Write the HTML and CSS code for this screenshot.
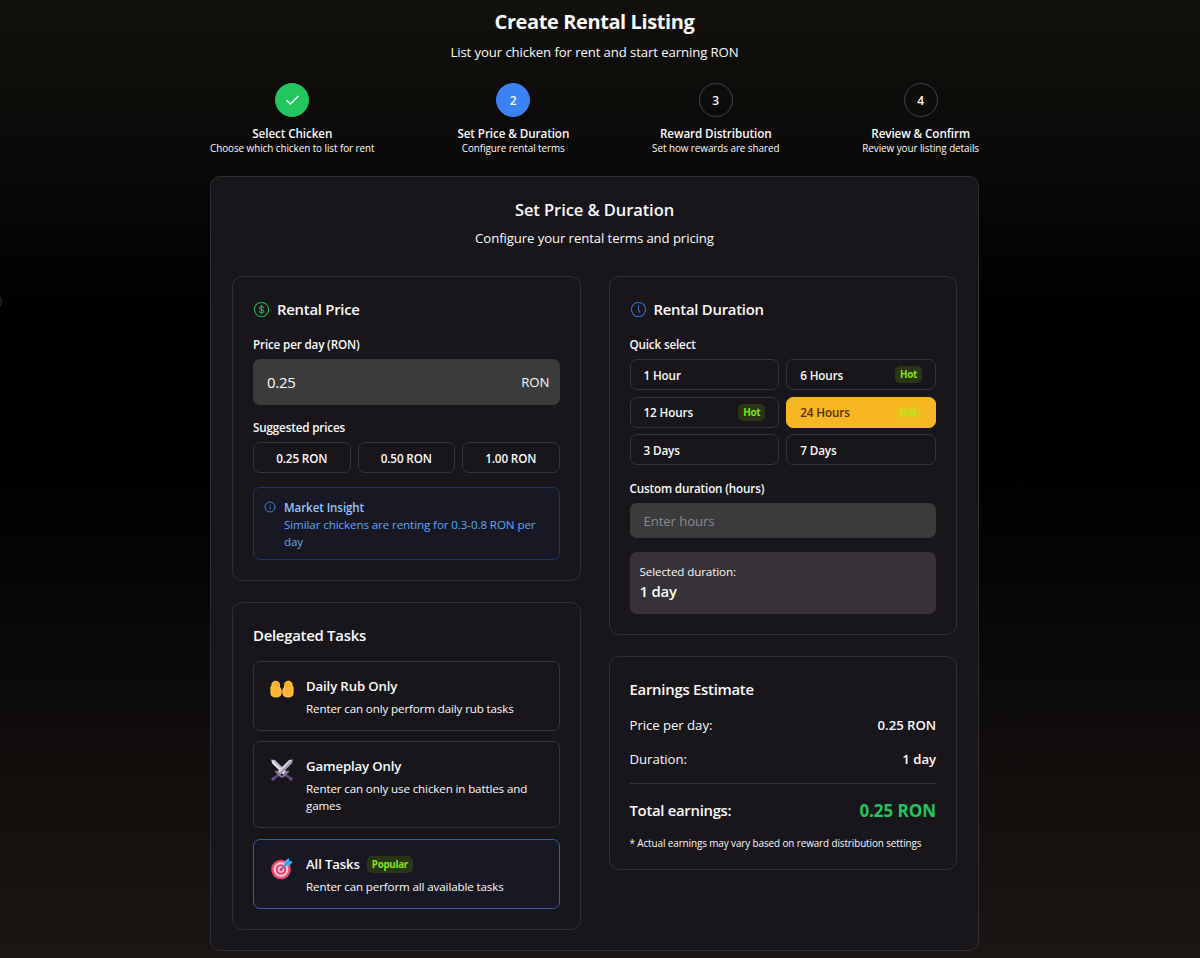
FILE: index.html
```html
<!DOCTYPE html>
<html lang="en">
<head>
    <meta charset="UTF-8">
    <meta name="viewport" content="width=device-width, initial-scale=1.0">
    <title>Create Rental Listing</title>
    <link rel="stylesheet" href="styles.css">
</head>
<body>
    <div class="edge-handle"></div>
    <main class="page">
        <header class="page-header">
            <h1>Create Rental Listing</h1>
            <p>List your chicken for rent and start earning RON</p>
        </header>

        <ol class="steps">
            <li class="step">
                <div class="step-circle done">
                    <svg viewBox="0 0 24 24"><path d="M20 6 9 17l-5-5"/></svg>
                </div>
                <strong>Select Chicken</strong>
                <span>Choose which chicken to list for rent</span>
            </li>
            <li class="step">
                <div class="step-circle current">2</div>
                <strong>Set Price &amp; Duration</strong>
                <span>Configure rental terms</span>
            </li>
            <li class="step">
                <div class="step-circle">3</div>
                <strong>Reward Distribution</strong>
                <span>Set how rewards are shared</span>
            </li>
            <li class="step">
                <div class="step-circle">4</div>
                <strong>Review &amp; Confirm</strong>
                <span>Review your listing details</span>
            </li>
        </ol>

        <section class="panel">
            <div class="panel-header">
                <h2>Set Price &amp; Duration</h2>
                <p>Configure your rental terms and pricing</p>
            </div>

            <div class="columns">
                <div class="column">
                    <div class="card">
                        <h3 class="with-icon">
                            <svg class="icon green" viewBox="0 0 24 24"><circle cx="12" cy="12" r="10"/><path d="M15 9.300C14.600 8.300 13.500 7.800 12 7.800c-1.800 0-3 .8-3 2 0 1.300 1.200 1.800 3 2.200s3.200.9 3.200 2.300c0 1.200-1.300 2-3.200 2-1.700 0-2.900-.6-3.300-1.700M12 6v12"/></svg>
                            Rental Price
                        </h3>
                        <label class="field-label" for="price">Price per day (RON)</label>
                        <div class="price-field">
                            <input type="text" id="price" value="0.25">
                            <span>RON</span>
                        </div>
                        <div class="field-label">Suggested prices</div>
                        <div class="price-options">
                            <button type="button">0.25 RON</button>
                            <button type="button">0.50 RON</button>
                            <button type="button">1.00 RON</button>
                        </div>
                        <div class="insight">
                            <svg class="insight-icon" viewBox="0 0 24 24"><circle cx="12" cy="12" r="10"/><path d="M12 16v-4"/><path d="M12 8h.01"/></svg>
                            <div>
                                <strong>Market Insight</strong>
                                <p>Similar chickens are renting for 0.3-0.8 RON per day</p>
                            </div>
                        </div>
                    </div>

                    <div class="card tasks">
                        <h3>Delegated Tasks</h3>
                        <div class="task">
                            <svg class="task-icon" viewBox="0 0 24 24">
                                <g id="hand">
                                    <path d="M.3 9.500q0-1.500 1-1.500L1.500 5.500q.3-1.300 1.400-1.200.5-1.500 1.700-1.300.9-.9 1.900 0 1.400-.4 1.800 1 1.400 0 1.500 1.500l.3 3.500q1.800 2 1.800 4.500 0 6-6 6T.4 14z" fill="#fcb935"/>
                                    <path d="M4 5v4M6.200 4.500v4.300M8.300 5.200V9M2.500 12.500q3.500-2 5.500 3" fill="none" stroke="#e8932a" stroke-width=".6"/>
                                </g>
                                <use href="#hand" transform="matrix(-1 0 0 1 24 0)"/>
                            </svg>
                            <div>
                                <h4>Daily Rub Only</h4>
                                <p>Renter can only perform daily rub tasks</p>
                            </div>
                        </div>
                        <div class="task">
                            <svg class="task-icon" viewBox="0 0 24 24">
                                <path d="M1.500 1.500 5 2l11.500 11.500-3 3L2 5z" fill="#b9b5c6"/>
                                <path d="M1.500 1.500 15 15l-1.500 1.500L2 5z" fill="#e4e1ea"/>
                                <path d="M22.500 1.500 19 2 7.500 13.500l3 3L22 5z" fill="#d3cfdd"/>
                                <path d="M22.500 1.500 9 15l1.500 1.500L22 5z" fill="#9c96ae"/>
                                <path d="m15 16.500 5.500 4M9 16.500l-5.500 4" stroke="#5b4783" stroke-width="2.400" stroke-linecap="round"/>
                                <path d="m13 18.500 5-5M11 18.500l-5-5" stroke="#8479a3" stroke-width="2" stroke-linecap="round"/>
                                <circle cx="21" cy="21" r="1.700" fill="#67518f"/>
                                <circle cx="3" cy="21" r="1.700" fill="#67518f"/>
                            </svg>
                            <div>
                                <h4>Gameplay Only</h4>
                                <p>Renter can only use chicken in battles and games</p>
                            </div>
                        </div>
                        <div class="task selected">
                            <svg class="task-icon" viewBox="0 0 24 24">
                                <circle cx="11" cy="13.500" r="9.800" fill="#e9486f"/>
                                <circle cx="11" cy="13.500" r="7.400" fill="#f7c6d6"/>
                                <circle cx="11" cy="13.500" r="5.300" fill="#e0456c"/>
                                <circle cx="11" cy="13.500" r="3.200" fill="#f5bfd0"/>
                                <circle cx="11" cy="13.500" r="1.500" fill="#d43b62"/>
                                <path d="m11 13.500 7-7" stroke="#2b78b5" stroke-width="1.400"/>
                                <path d="M14.500 9.500V5.800L18.500 2l1 3 3.500.8-4 4z" fill="#45b4f5"/>
                                <path d="m14.500 9.500 5-4.500" stroke="#1d7fd0" stroke-width="1"/>
                            </svg>
                            <div>
                                <h4>All Tasks <span class="badge">Popular</span></h4>
                                <p>Renter can perform all available tasks</p>
                            </div>
                        </div>
                    </div>
                </div>

                <div class="column">
                    <div class="card">
                        <h3 class="with-icon">
                            <svg class="icon blue" viewBox="0 0 24 24"><circle cx="12" cy="12" r="10"/><path d="M12 6v6l2 4"/></svg>
                            Rental Duration
                        </h3>
                        <div class="field-label">Quick select</div>
                        <div class="durations">
                            <button type="button">1 Hour</button>
                            <button type="button">6 Hours <span class="badge">Hot</span></button>
                            <button type="button">12 Hours <span class="badge">Hot</span></button>
                            <button type="button" class="active">24 Hours <span class="badge">Hot</span></button>
                            <button type="button">3 Days</button>
                            <button type="button">7 Days</button>
                        </div>
                        <label class="field-label" for="hours">Custom duration (hours)</label>
                        <input type="text" id="hours" class="hours-input" placeholder="Enter hours">
                        <div class="selected-duration">
                            <p>Selected duration:</p>
                            <strong>1 day</strong>
                        </div>
                    </div>

                    <div class="card earnings">
                        <h3>Earnings Estimate</h3>
                        <div class="row">
                            <span>Price per day:</span>
                            <strong>0.25 RON</strong>
                        </div>
                        <div class="row">
                            <span>Duration:</span>
                            <strong>1 day</strong>
                        </div>
                        <div class="row total">
                            <span>Total earnings:</span>
                            <strong>0.25 RON</strong>
                        </div>
                        <p class="note">* Actual earnings may vary based on reward distribution settings</p>
                    </div>
                </div>
            </div>
        </section>
    </main>
</body>
</html>
```
FILE: styles.css
```css
* {
    box-sizing: border-box;
}
body {
    margin: 0;
    padding-right: 11px;
    height: 958px;
    overflow: hidden;
    font-family: 'Open Sans', 'Noto Sans', sans-serif;
    font-size: 13.2px;
    color: #fafafa;
    background: linear-gradient(#13110e 0%, #0b0a08 16%, #000 33%, #000 48%, #0d0b0a 72%, #1b1613 100%);
}
h1, h2, h3, h4, p, ol {
    margin: 0;
    padding: 0;
}
strong, h2, h3, h4 {
    font-weight: 600;
}
button, input {
    font-family: inherit;
    color: inherit;
}
.edge-handle {
    position: absolute;
    left: -14px;
    top: 294px;
    width: 16px;
    height: 16px;
    border: 1px solid #333;
    border-radius: 50%;
}
.page {
    width: 769px;
    margin: 0 auto;
}
.page-header {
    padding-top: 8px;
    text-align: center;
}
.page-header h1 {
    font-size: 20px;
    line-height: 28px;
    letter-spacing: -0.4px;
}
.page-header p {
    margin-top: 7px;
    line-height: 19px;
    letter-spacing: -0.11px;
}
.steps {
    display: flex;
    justify-content: space-between;
    margin-top: 21px;
    list-style: none;
}
.step {
    display: flex;
    flex-direction: column;
    align-items: center;
}
.step-circle {
    display: flex;
    align-items: center;
    justify-content: center;
    width: 34px;
    height: 34px;
    margin-bottom: 8px;
    border: 1px solid #46414a;
    border-radius: 50%;
    font-size: 12px;
    font-weight: 600;
}
.step-circle.done {
    background: #22c55e;
    border-color: #22c55e;
}
.step-circle.current {
    background: #3b82f6;
    border-color: #3b82f6;
}
.step-circle svg {
    width: 17px;
    height: 17px;
    fill: none;
    stroke: #fff;
    stroke-width: 2;
    stroke-linecap: round;
    stroke-linejoin: round;
}
.step strong {
    font-size: 11.7px;
    line-height: 17px;
    letter-spacing: -0.1px;
}
.step span {
    font-size: 9.9px;
    line-height: 13px;
    margin-bottom: 1px;
    letter-spacing: -0.06px;
}
.panel {
    height: 775px;
    margin-top: 20px;
    padding: 21px 21px 0;
    background: #18161a;
    border: 1px solid #302d33;
    border-radius: 10px;
}
.panel-header {
    text-align: center;
}
.panel-header h2 {
    font-size: 16.5px;
    line-height: 24px;
    letter-spacing: -0.08px;
}
.panel-header p {
    margin-top: 7px;
    line-height: 19px;
    letter-spacing: -0.1px;
}
.columns {
    display: grid;
    grid-template-columns: 1fr 1fr;
    gap: 28px;
    align-items: start;
    margin-top: 28px;
}
.column {
    display: flex;
    flex-direction: column;
    gap: 21px;
}
.card {
    padding: 20px;
    border: 1px solid #302d33;
    border-radius: 10px;
}
.card h3 {
    margin-bottom: 1px;
    font-size: 14.9px;
    line-height: 24px;
    letter-spacing: -0.26px;
}
.with-icon {
    display: flex;
    align-items: center;
    gap: 7px;
}
.icon {
    width: 17px;
    height: 17px;
    fill: none;
    stroke-width: 1.5;
    stroke-linecap: round;
    stroke-linejoin: round;
}
.icon.green {
    stroke: #20b457;
}
.icon.blue {
    stroke: #3674db;
}
.field-label {
    display: block;
    margin: 15px 0 6px;
    font-size: 11.7px;
    font-weight: 600;
    line-height: 17px;
    letter-spacing: -0.17px;
}
.price-field {
    display: flex;
    align-items: center;
    height: 46px;
    padding: 0 10px 0 14px;
    background: #3b3b3b;
    border-radius: 7px;
}
.price-field + .field-label {
    margin-top: 14px;
}
.price-field input {
    flex: 1;
    min-width: 0;
    padding: 0;
    background: none;
    border: none;
    font-size: 15px;
    letter-spacing: -0.3px;
}
.price-options {
    display: grid;
    grid-template-columns: repeat(3, 1fr);
    gap: 7px;
}
.price-options button,
.durations button {
    height: 31px;
    background: #18161a;
    border: 1px solid #37343a;
    border-radius: 7px;
    font-size: 11.7px;
    font-weight: 600;
    letter-spacing: -0.13px;
}
.insight {
    display: flex;
    gap: 8px;
    height: 73px;
    margin-top: 14px;
    padding: 11px 10px;
    background: #181824;
    border: 1px solid #20316b;
    border-radius: 7px;
    font-size: 11.6px;
    line-height: 17px;
    letter-spacing: -0.1px;
    color: #60a5fa;
}
.insight-icon {
    flex: none;
    width: 12px;
    height: 12px;
    margin-top: 2px;
    fill: none;
    stroke: #3b7be0;
    stroke-width: 2;
    stroke-linecap: round;
}
.insight strong {
    display: block;
    color: #93c5fd;
}
.task {
    display: flex;
    gap: 12px;
    margin-top: 10.4px;
    padding: 14px 16px 13px;
    border: 1px solid #37343a;
    border-radius: 7px;
}
.card h3 + .task {
    margin-top: 14px;
}
.task.selected {
    background: #181824;
    border-color: #335ea8;
}
.task-icon {
    flex: none;
    width: 24px;
    height: 24px;
    margin-top: 2px;
}
.task h4 {
    display: flex;
    align-items: center;
    gap: 7px;
    font-size: 13.2px;
    line-height: 21px;
    letter-spacing: -0.13px;
}
.task p {
    margin-top: 3px;
    font-size: 11.6px;
    line-height: 17px;
    letter-spacing: -0.13px;
}
.badge {
    padding: 0 5px;
    background: #2a3516;
    border-radius: 5px;
    font-size: 9.9px;
    font-weight: 700;
    line-height: 17px;
    letter-spacing: -0.35px;
    color: #84e11b;
}
.durations {
    display: grid;
    grid-template-columns: 1fr 1fr;
    gap: 6.5px 7px;
}
.durations button {
    display: flex;
    align-items: center;
    justify-content: space-between;
    padding: 0 13px;
}
.durations .active {
    background: #f7b722;
    border-color: #f7b722;
    color: #4f3207;
}
.durations .active .badge {
    background: #efbf22;
    color: #b9e41f;
}
.hours-input {
    display: block;
    width: 100%;
    height: 35px;
    padding: 1px 14px 0;
    background: #3b3b3b;
    border: none;
    border-radius: 7px;
    font-size: 13.2px;
    letter-spacing: -0.1px;
}
.hours-input::placeholder {
    color: #878c93;
}
.selected-duration {
    height: 62px;
    margin-top: 14px;
    padding: 11px 10px;
    background: #373138;
    border-radius: 7px;
}
.selected-duration p {
    font-size: 11.6px;
    line-height: 17px;
    letter-spacing: -0.1px;
}
.selected-duration strong {
    display: block;
    font-size: 14.9px;
    line-height: 23px;
    letter-spacing: -0.2px;
}
.earnings {
    height: 214px;
}
.row {
    display: flex;
    align-items: center;
    justify-content: space-between;
    margin-top: 14px;
    line-height: 20px;
    letter-spacing: -0.05px;
}
.row.total {
    margin-top: 14px;
    padding-top: 14px;
    border-top: 1px solid #37343a;
    font-size: 14.9px;
    line-height: 25px;
}
.total span {
    font-weight: 600;
    letter-spacing: -0.3px;
}
.total strong {
    font-size: 17px;
    font-weight: 700;
    color: #22c55e;
}
.note {
    margin-top: 13px;
    font-size: 9.9px;
    line-height: 14px;
    letter-spacing: -0.09px;
}
```
